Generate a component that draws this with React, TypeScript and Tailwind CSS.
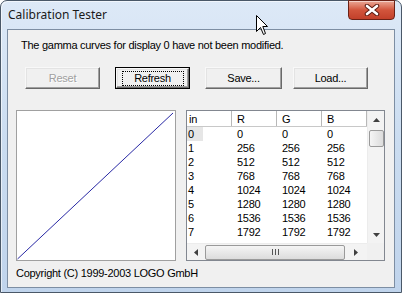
import React from 'react';

const rows = [0, 1, 2, 3, 4, 5, 6, 7].map((i) => [i, i * 256, i * 256, i * 256]);

const Btn: React.FC<{ label: string; disabled?: boolean; def?: boolean; className?: string }> = ({ label, disabled, def, className }) => (
  <div className={`h-[22px] w-[75px] ${def ? 'border border-black' : ''} ${className ?? ''}`}>
    <div className="h-full w-full border border-t-[#f8f8f8] border-l-[#f8f8f8] border-r-[#696969] border-b-[#696969] bg-[#f0f0f0] shadow-[inset_-1px_-1px_0_#a0a0a0,inset_1px_1px_0_#e3e3e3] flex items-center justify-center">
      {def ? (
        <span className="border border-dotted border-black px-[7px] leading-[13px] w-[62px] text-center">{label}</span>
      ) : (
        <span className={disabled ? 'text-[#a0a0a0] [text-shadow:1px_1px_0_#fff]' : ''}>{label}</span>
      )}
    </div>
  </div>
);

const Arrow: React.FC<{ dir: 'up' | 'down' | 'left' | 'right' }> = ({ dir }) => {
  const pts = {
    up: '0,4 3.5,0 7,4',
    down: '0,0 3.5,4 7,0',
    left: '4,0 0,3.5 4,7',
    right: '0,0 4,3.5 0,7',
  }[dir];
  const vert = dir === 'up' || dir === 'down';
  return (
    <svg width={vert ? 7 : 4} height={vert ? 4 : 7} viewBox={vert ? '0 0 7 4' : '0 0 4 7'}>
      <polygon points={pts} fill="#404040" />
    </svg>
  );
};

const ListView: React.FC = () => (
  <div className="w-[199px] h-[151px] border border-[#828790] bg-white flex flex-col">
    <div className="flex flex-1 min-h-0">
      <div className="w-[180px] overflow-hidden">
        <div className="flex h-[16px] border-b border-[#c8c8c8] items-center">
          {['in', 'R', 'G', 'B'].map((h, i) => (
            <div key={h} className={`w-[45px] h-full flex items-center border-r border-[#b8b8b8] ${i === 0 ? 'pl-[2px]' : 'pl-[5px]'}`}>
              {h}
            </div>
          ))}
        </div>
        {rows.map((r) => (
          <div key={r[0]} className="flex h-[14px] items-center">
            {r.map((v, i) => (
              <div key={i} className={`w-[45px] ${i === 0 ? 'pl-0' : 'pl-[5px]'}`}>
                {i === 0 && r[0] === 0 ? (
                  <span className="inline-block bg-[#e6e6e6] pl-[1px] w-[16px] leading-[14px]">{v}</span>
                ) : (
                  <span className={i === 0 ? 'pl-[1px]' : ''}>{v}</span>
                )}
              </div>
            ))}
          </div>
        ))}
      </div>
      <div className="w-[17px] bg-[#f3f3f3] border-l border-[#ececec] flex flex-col items-center">
        <div className="h-[17px] flex items-center justify-center"><Arrow dir="up" /></div>
        <div className="mt-[2px] w-[15px] h-[17px] rounded-[2px] border border-[#9a9a9a] bg-gradient-to-r from-[#f5f5f5] to-[#dcdcdc]" />
        <div className="flex-1" />
        <div className="h-[17px] flex items-center justify-center"><Arrow dir="down" /></div>
      </div>
    </div>
    <div className="flex h-[17px]">
      <div className="w-[180px] bg-[#f3f3f3] border-t border-[#ececec] flex items-center">
        <div className="w-[17px] flex items-center justify-center"><Arrow dir="left" /></div>
        <div className="ml-[1px] w-[140px] h-[15px] rounded-[2px] border border-[#9a9a9a] bg-gradient-to-b from-[#f5f5f5] to-[#dcdcdc] flex items-center justify-center">
          <div className="flex gap-[2px]">
            <div className="w-px h-[6px] bg-[#555]" />
            <div className="w-px h-[6px] bg-[#555]" />
            <div className="w-px h-[6px] bg-[#555]" />
          </div>
        </div>
        <div className="flex-1 flex items-center justify-center"><Arrow dir="right" /></div>
      </div>
      <div className="w-[17px] bg-[#f0f0f0]" />
    </div>
  </div>
);

export default function App() {
  return (
    <div className="relative w-[402px] h-[293px] bg-white">
      <div className="w-[402px] h-[293px] flex flex-col rounded-t-[7px] border border-[#4a5868] bg-gradient-to-b from-[#dde9f7] via-[#cadcf0] to-[#c0d4ec] shadow-[inset_1px_1px_0_rgba(255,255,255,0.6)] font-['Liberation_Sans',Arial,sans-serif] text-[11px] tracking-[-0.27px] text-black">
        <div className="h-[28px] flex items-start justify-between shrink-0">
          <div className="pl-[7px] pt-[6px] font-['Noto_Sans',sans-serif] text-[12px] tracking-normal leading-[16px] text-[#1a1a1a]">
            Calibration Tester
          </div>
          <div className="-mt-px mr-[6px] w-[47px] h-[20px] rounded-b-[4px] border border-[#6b2115] bg-gradient-to-b from-[#e9a795] via-[#d2553c] to-[#c2402a] shadow-[inset_0_1px_0_rgba(255,255,255,0.5)] flex items-center justify-center">
            <svg width="16" height="12" viewBox="0 0 16 12">
              <path d="M3 2 L13 10 M13 2 L3 10" stroke="#5a1a10" strokeWidth="4.5" strokeLinecap="round" />
              <path d="M3 2 L13 10 M13 2 L3 10" stroke="#ffffff" strokeWidth="2.6" strokeLinecap="round" />
            </svg>
          </div>
        </div>
        <div className="flex-1 mx-[6px] mb-[4px] border border-[#7d8ea3] bg-[#f0f0f0] flex flex-col">
          <div className="pt-[9px] pl-[13px] leading-[13px]">
            The gamma curves for display 0 have not been modified.
          </div>
          <div className="mt-[15px] pl-[17px] flex leading-[13px]">
            <Btn label="Reset" disabled />
            <Btn label="Refresh" def className="ml-[15px]" />
            <Btn label="Save..." className="ml-[15px] w-[77px]" />
            <Btn label="Load..." className="ml-[11px]" />
          </div>
          <div className="mt-[21px] pl-[8px] flex gap-[10px] leading-[14px]">
            <div className="w-[160px] h-[151px] border border-[#a0a0a0] bg-white">
              <svg width="158" height="149" viewBox="0 0 158 149">
                <line x1="0.5" y1="148" x2="156" y2="2" stroke="#10109a" strokeWidth="0.9" />
              </svg>
            </div>
            <ListView />
          </div>
          <div className="mt-[6px] pl-[8px] leading-[13px]">Copyright (C) 1999-2003 LOGO GmbH</div>
        </div>
      </div>
      <svg className="absolute left-[256px] top-[15px]" width="13" height="21" viewBox="0 0 13 21">
        <path d="M0.5 0.5 L0.5 16.5 L4.5 12.5 L7.5 19.5 L9.5 18.5 L6.8 11.5 L11.5 11.5 Z" fill="#fff" stroke="#000" strokeWidth="1" strokeLinejoin="miter" />
      </svg>
    </div>
  );
}
